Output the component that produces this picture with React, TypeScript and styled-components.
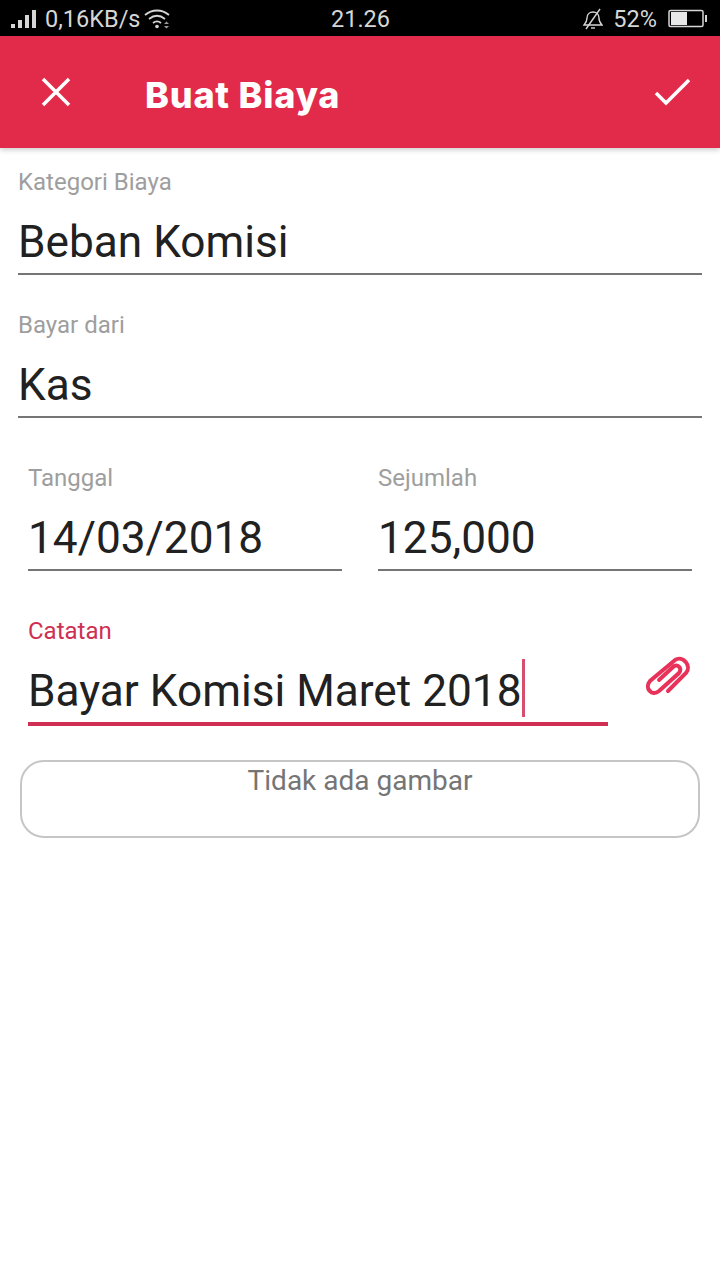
import React from "react";
import styled, { createGlobalStyle } from "styled-components";

const GlobalStyle = createGlobalStyle`
  html, body {
    margin: 0;
    padding: 0;
    background: #fff;
    font-family: Roboto, "Liberation Sans", sans-serif;
  }
`;

const Page = styled.div`
  width: 720px;
  height: 1280px;
  overflow: hidden;
  background: #fff;
`;

const StatusBar = styled.div`
  position: relative;
  display: flex;
  align-items: center;
  justify-content: space-between;
  height: 36px;
  padding: 2px 12px 0 10px;
  box-sizing: border-box;
  background: #000;
  color: #d6d6d6;
  font-size: 23.5px;
`;

const StatusGroup = styled.div`
  display: flex;
  align-items: center;
`;

const StatusTime = styled.span`
  position: absolute;
  left: 331px;
  top: 5px;
  line-height: 28px;
`;

const SignalBars = styled.div`
  display: flex;
  align-items: flex-end;
  gap: 3px;
  height: 18px;
  margin: 0 9px 0 1px;
`;

const SignalBar = styled.span<{ $h: number }>`
  display: block;
  width: 4px;
  height: ${({ $h }) => $h}px;
  background: #d6d6d6;
`;

const AppBar = styled.header`
  position: relative;
  display: flex;
  align-items: center;
  height: 112px;
  padding: 0 30px 0 40px;
  box-sizing: border-box;
  background: #e22b4a;
  box-shadow: 0 2px 5px rgba(0, 0, 0, 0.2);
`;

const Title = styled.h1`
  flex: 1;
  margin: 6px 0 0 73px;
  color: #fff;
  font-family: Inter, sans-serif;
  font-size: 36px;
  font-weight: 800;
  line-height: 44px;
  letter-spacing: 0.8px;
`;

const Form = styled.main`
  display: flex;
  flex-direction: column;
  padding: 21px 18px 0;
`;

const Field = styled.div<{ $height: number }>`
  display: flex;
  flex-direction: column;
  height: ${({ $height }) => $height}px;
`;

const FieldRow = styled.div`
  display: flex;
  gap: 36px;
  padding: 0 10px;
`;

const Cell = styled.div`
  flex: 1;
  min-width: 0;
`;

const Label = styled.label<{ $active?: boolean }>`
  display: block;
  color: ${({ $active }) => ($active ? "#cf2f52" : "#9e9e9e")};
  font-size: 24px;
  line-height: 26px;
`;

const Value = styled.div<{ $active?: boolean }>`
  display: flex;
  align-items: center;
  height: 62px;
  padding-top: 16px;
  border-bottom: ${({ $active }) =>
    $active ? "4px solid #cf2f52" : "2px solid #757575"};
  color: #212121;
  font-size: 44.2px;
  line-height: 54px;
  white-space: nowrap;
`;

const Caret = styled.span`
  display: inline-block;
  width: 3px;
  height: 58px;
  margin: -6px 0 0 0;
  background: #d4506e;
`;

const NoteRow = styled.div`
  display: flex;
  align-items: flex-start;
  padding: 0 10px;
  margin-top: 47px;
`;

const NoteField = styled.div`
  width: 580px;
`;

const AttachButton = styled.div`
  display: flex;
  margin: 37px 0 0 37px;
`;

const ImageBox = styled.div`
  height: 78px;
  margin: 34px 2px 0;
  padding-top: 1px;
  box-sizing: border-box;
  border: 2px solid #c6c6c6;
  border-radius: 24px;
  color: #757575;
  font-size: 28px;
  line-height: 36px;
  text-align: center;
`;

export default function App() {
  return (
    <Page>
      <GlobalStyle />
      <StatusBar>
        <StatusGroup>
          <SignalBars>
            <SignalBar $h={4} />
            <SignalBar $h={8} />
            <SignalBar $h={13} />
            <SignalBar $h={18} />
          </SignalBars>
          <span>0,16KB/s</span>
          <svg width="26" height="20" viewBox="0 0 26 20" fill="none" stroke="#d6d6d6" strokeWidth="1.800" style={{ marginLeft: 4 }}>
            <path d="M1 6c7-6 17-6 24 0" />
            <path d="M5 10c5-4 11-4 16 0" />
            <path d="M9 14c2.500-2 5.500-2 8 0" />
            <circle cx="13" cy="17.500" r="1.800" fill="#d6d6d6" stroke="none" />
            <path d="M20 15l2.500-2.500L25 15zM20 17l2.500 2.500L25 17z" fill="#9a9a9a" stroke="none" />
          </svg>
        </StatusGroup>
        <StatusTime>21.26</StatusTime>
        <StatusGroup>
          <svg width="20" height="22" viewBox="0 0 20 22" fill="none" stroke="#d6d6d6" strokeWidth="1.400" style={{ marginRight: 10 }}>
            <path d="M1 17c2-2 3-3 3-7 0-4 3-6 6-6s6 2 6 6c0 4 1 5 3 7H1z" />
            <path d="M8 20h4" />
            <path d="M17 1L3 21" />
          </svg>
          <span>52%</span>
          <svg width="40" height="20" viewBox="0 0 40 20" style={{ marginLeft: 11 }}>
            <rect x="1" y="1.500" width="34" height="16" rx="1.500" fill="none" stroke="#d6d6d6" strokeWidth="1.500" />
            <rect x="3" y="3" width="16" height="13" fill="#e8e8e8" />
            <rect x="37" y="6" width="2" height="7" fill="#d6d6d6" />
          </svg>
        </StatusGroup>
      </StatusBar>

      <AppBar>
        <svg width="32" height="32" viewBox="0 0 32 32" fill="none" stroke="#fff" strokeWidth="3.500">
          <path d="M3 3l26 26M29 3L3 29" />
        </svg>
        <Title>Buat Biaya</Title>
        <svg width="36" height="28" viewBox="0 0 36 28" fill="none" stroke="#fff" strokeWidth="3.500">
          <path d="M2 15l10 10L35 2" />
        </svg>
      </AppBar>

      <Form>
        <Field $height={143}>
          <Label>Kategori Biaya</Label>
          <Value>Beban Komisi</Value>
        </Field>
        <Field $height={153}>
          <Label>Bayar dari</Label>
          <Value>Kas</Value>
        </Field>
        <FieldRow>
          <Cell>
            <Label>Tanggal</Label>
            <Value>14/03/2018</Value>
          </Cell>
          <Cell>
            <Label>Sejumlah</Label>
            <Value>125,000</Value>
          </Cell>
        </FieldRow>
        <NoteRow>
          <NoteField>
            <Label $active>Catatan</Label>
            <Value $active>
              Bayar Komisi Maret 2018
              <Caret />
            </Value>
          </NoteField>
          <AttachButton>
            <svg width="46" height="41" viewBox="0 0 46 41" fill="none" stroke="#e8325a" strokeWidth="4" strokeLinecap="round">
              <path d="M23 36L41 18c6-7-3-18-11-13L5 26c-6 7 2 16 9 10l20-18c4-5-2-10-6-6L14 25" />
            </svg>
          </AttachButton>
        </NoteRow>
        <ImageBox>Tidak ada gambar</ImageBox>
      </Form>
    </Page>
  );
}
